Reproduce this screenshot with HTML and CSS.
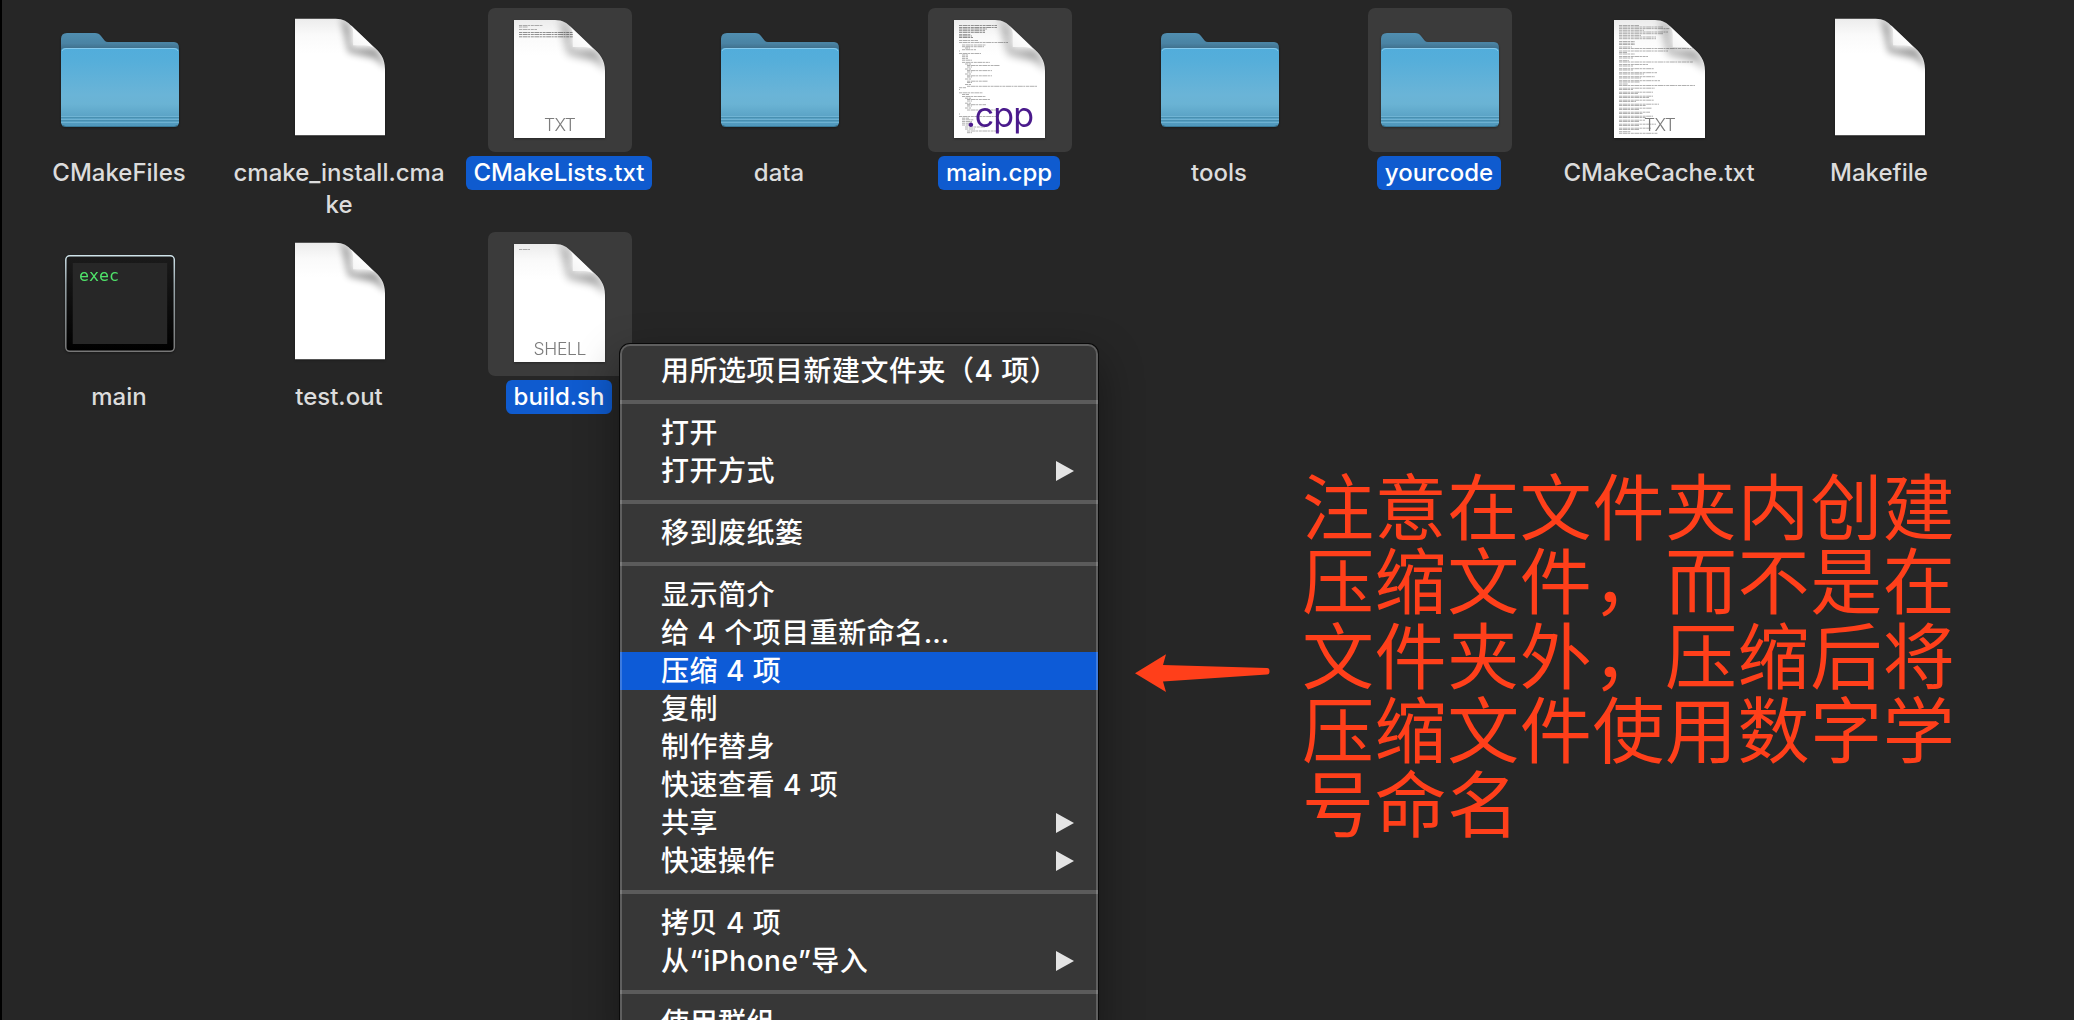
FILE: index.html
```html
<!DOCTYPE html>
<html lang="zh-CN">
<head>
<meta charset="utf-8">
<title>Finder</title>
<link rel="stylesheet" href="styles.css">
</head>
<body>
<svg class="defs" width="0" height="0" aria-hidden="true">
  <defs>
    <linearGradient id="folderFront" x1="0" y1="0" x2="0" y2="1">
      <stop offset="0" stop-color="#52addb"/><stop offset=".15" stop-color="#55aeda"/>
      <stop offset=".6" stop-color="#6ab4d7"/><stop offset=".72" stop-color="#6ab3d4"/><stop offset="1" stop-color="#4f97bb"/>
    </linearGradient>
    <linearGradient id="folderBack" x1="0" y1="0" x2="0" y2="1">
      <stop offset="0" stop-color="#508eb0"/><stop offset=".12" stop-color="#4a83a3"/><stop offset=".18" stop-color="#3f6f8b"/><stop offset="1" stop-color="#3f6f8b"/>
    </linearGradient>
    <linearGradient id="paperTop" x1="0" y1="0" x2="0" y2="1">
      <stop offset="0" stop-color="#ececec"/><stop offset=".14" stop-color="#fafafa"/><stop offset=".3" stop-color="#fff"/>
    </linearGradient>
    <linearGradient id="flap" x1="0" y1="1" x2=".6" y2=".4">
      <stop offset="0" stop-color="#f1f1f1"/><stop offset="1" stop-color="#fff"/>
    </linearGradient>
    <linearGradient id="bezel" x1="0" y1="0" x2="0" y2="1">
      <stop offset="0" stop-color="#cfe3ea"/><stop offset=".3" stop-color="#9aa7ac"/><stop offset="1" stop-color="#777"/>
    </linearGradient>
    <linearGradient id="frame" x1="0" y1="0" x2="0" y2="1">
      <stop offset="0" stop-color="#1b1b1b"/><stop offset="1" stop-color="#000"/>
    </linearGradient>
    <filter id="soft" x="-50%" y="-50%" width="200%" height="200%"><feGaussianBlur stdDeviation="4"/></filter>
    <clipPath id="sheet"><path d="M0 0H41C49 0 53 3 58 8L79 28C86 34 91 40 91 51V118H0Z"/></clipPath>

    <symbol id="folder" viewBox="0 0 144 144">
      <path d="M13 31q0-6 6-6h28q4 0 6 3l4 5q1 1 3 1h66q5 0 5 6v72H13Z" fill="url(#folderBack)"/>
      <rect x="13" y="40" width="118" height="78" rx="4" fill="url(#folderFront)"/>
      <path d="M14 43q1-2.500 4-2.500h108q3 0 4 2.500" fill="none" stroke="#86cbee" stroke-width="1"/>
      <path d="M13 108.500h118M13 111.500h118M13 114.500h118" stroke="#7fc0de" stroke-width="1" opacity=".6"/>
      <path d="M13 109.500h118M13 112.500h118" stroke="#397f9f" stroke-width="1" opacity=".5"/>
      <path d="M14 117.500q2 1 4 1h108q2 0 4-1" fill="none" stroke="#397896" stroke-width="1"/>
    </symbol>

    <symbol id="paper" viewBox="0 0 91 118">
      <path d="M0 0H41C49 0 53 3 58 8L79 28C86 34 91 40 91 51V118H0Z" fill="url(#paperTop)"/>
    </symbol>
    <symbol id="curl" viewBox="0 0 91 118">
      <g clip-path="url(#sheet)">
        <path d="M46-3L55 8 57 30 82 30 95 52 80 40 54 34Z" fill="#000" opacity=".4" filter="url(#soft)"/>
      </g>
      <path d="M56 6.500Q59 10 58.800 14V27H70Q76 27 80 30Z" fill="url(#flap)"/>
    </symbol>
  </defs>
</svg>

<main class="window">
  <section class="files">
    <figure class="file">
      <div class="thumb"><svg class="icon"><use href="#folder"/></svg></div>
      <figcaption>CMakeFiles</figcaption>
    </figure>
    <figure class="file">
      <div class="thumb"><svg class="icon" viewBox="0 0 144 144"><use href="#paper" x="27" y="10" width="90" height="118"/><use href="#curl" x="27" y="10" width="90" height="118"/></svg></div>
      <figcaption>cmake_install.cma<br>ke</figcaption>
    </figure>
    <figure class="file selected">
      <div class="thumb"><svg class="icon" viewBox="0 0 144 144"><g transform="translate(26 12)"><use href="#paper" width="91" height="118"/>
        <path class="code" d="M5 5.500h24M5 7h9M5 9.500h18"/><path class="code dense" d="M5 12.500h54M5 14.500h54M5 16.800h54"/>
        <use href="#curl" width="91" height="118"/><text class="kind" x="30" y="110.500" textLength="32">TXT</text></g></svg></div>
      <figcaption>CMakeLists.txt</figcaption>
    </figure>
    <figure class="file">
      <div class="thumb"><svg class="icon"><use href="#folder"/></svg></div>
      <figcaption>data</figcaption>
    </figure>
    <figure class="file selected">
      <div class="thumb"><svg class="icon" viewBox="0 0 144 144"><g transform="translate(26 12)"><use href="#paper" width="91" height="118"/>
        <path class="code dense" d="M5 5.500h38M5 7.500h38M5 9h28M5 10.700h26M5 12.400h26M5 14.700h12M5 16h13M5 17.500h14"/>
        <path class="code" d="M5 20.500h19M5 22.500h49M8 25h24M8 26.700h22M11 28h5M8 29.700h14M5 31h1M5 33.500h22M8 35h6M8 36.700h6M8 38.400h6M8 40.200h10M8 42.400h28M11 44h6M13 45.500h33M13 47h5M11 49h6M13 50.600h25M13 52h5M11 54h6M13 55.800h25M13 57h5M11 59h6M13 61.200h21M13 62.500h5M11 64.500h6M13 66.300h70M5 67.700h7M5 69.500h1M5 72.800h24M8 74.500h7M8 76.500h24M11 78.200h6M13 79.500h23M13 81h5M11 83.200h6M13 84.700h19M13 86h5M11 88h6M13 90h30M5 94h1M5 96.500h40M8 98.200h7M8 99.800h12M8 101.500h10M8 103.200h10M8 105h8M11 107h20M11 109h10M13 111h33M13 112.700h5"/>
        <use href="#curl" width="91" height="118"/><text class="cpp" x="12" y="106.500" textLength="68">.cpp</text></g></svg></div>
      <figcaption>main.cpp</figcaption>
    </figure>
    <figure class="file">
      <div class="thumb"><svg class="icon"><use href="#folder"/></svg></div>
      <figcaption>tools</figcaption>
    </figure>
    <figure class="file selected">
      <div class="thumb"><svg class="icon"><use href="#folder"/></svg></div>
      <figcaption>yourcode</figcaption>
    </figure>
    <figure class="file">
      <div class="thumb"><svg class="icon" viewBox="0 0 144 144"><g transform="translate(26 12)"><use href="#paper" width="91" height="118"/>
        <path class="code" d="M5 5.500h20M5 7h44M5 8.600h51M5 10.300h25M5 12h49M5 13.700h44M5 15.400h22M5 17h37M5 18.700h37M5 21.500h16M5 23.200h16M5 24.500h16M5 27h13M5 28.500h74M5 31h49M5 32.500h8M5 34h16M5 36.500h29M5 38h14M5 40.700h10M5 42h74M5 44.500h29M5 46h14M5 48.700h35M5 50h14M5 52.700h38M5 54h25M5 56.700h36M5 58h22M5 60.700h41M5 62h21M5 64h9M5 65.500h76M5 68.200h36M5 69.500h14M5 72.200h34M5 73.500h19M5 76.200h34M5 77.500h30M5 80.200h35M5 81.500h17M5 84.200h40M5 85.500h27M5 88.200h33M5 89.500h20M5 92.200h31M5 93.500h24M5 96.200h34M5 97.500h27M5 100.200h26M5 101.500h20M5 104.200h37M5 105.500h20M5 108.200h32M5 109.500h20M5 111.700h12M5 113.300h39"/>
        <use href="#curl" width="91" height="118"/><text class="kind" x="30" y="110.500" textLength="32">TXT</text></g></svg></div>
      <figcaption>CMakeCache.txt</figcaption>
    </figure>
    <figure class="file">
      <div class="thumb"><svg class="icon" viewBox="0 0 144 144"><use href="#paper" x="27" y="10" width="90" height="118"/><use href="#curl" x="27" y="10" width="90" height="118"/></svg></div>
      <figcaption>Makefile</figcaption>
    </figure>
    <figure class="file">
      <div class="thumb"><svg class="icon" viewBox="0 0 144 144">
        <rect x="17.800" y="23.800" width="108.500" height="95.500" rx="4" fill="url(#frame)" stroke="url(#bezel)" stroke-width="1.500"/>
        <rect x="24.700" y="31" width="94.500" height="81" fill="#272727"/>
        <text class="exec" x="31" y="48.500">exec</text></svg></div>
      <figcaption>main</figcaption>
    </figure>
    <figure class="file">
      <div class="thumb"><svg class="icon" viewBox="0 0 144 144"><use href="#paper" x="27" y="10" width="90" height="118"/><use href="#curl" x="27" y="10" width="90" height="118"/></svg></div>
      <figcaption>test.out</figcaption>
    </figure>
    <figure class="file selected">
      <div class="thumb"><svg class="icon" viewBox="0 0 144 144"><g transform="translate(26 12)"><use href="#paper" width="91" height="118"/>
        <path class="code" d="M5 5.500h11"/>
        <use href="#curl" width="91" height="118"/><text class="kind" x="19.500" y="111" textLength="53">SHELL</text></g></svg></div>
      <figcaption>build.sh</figcaption>
    </figure>
  </section>

  <nav class="menu">
    <ul>
      <li>用所选项目新建文件夹（4 项）</li>
    </ul>
    <ul>
      <li>打开</li>
      <li class="more">打开方式</li>
    </ul>
    <ul>
      <li>移到废纸篓</li>
    </ul>
    <ul>
      <li>显示简介</li>
      <li>给 4 个项目重新命名…</li>
      <li class="active">压缩 4 项</li>
      <li>复制</li>
      <li>制作替身</li>
      <li>快速查看 4 项</li>
      <li class="more">共享</li>
      <li class="more">快速操作</li>
    </ul>
    <ul>
      <li>拷贝 4 项</li>
      <li class="more">从“iPhone”导入</li>
    </ul>
    <ul>
      <li>使用群组</li>
    </ul>
  </nav>

  <aside class="note">
    <svg class="arrow" viewBox="0 0 136 40"><path d="M0 20.300L31 1.300 28 12 132 15Q134.500 15 134.500 18.200T132 21.400L28 28.500 31 39Z" fill="#ff3f1a"/></svg>
    <p>注意在文件夹内创建<br>压缩文件，而不是在<br>文件夹外，压缩后将<br>压缩文件使用数字学<br>号命名</p>
  </aside>
</main>
</body>
</html>
```
FILE: styles.css
```css
* { box-sizing: border-box; margin: 0; padding: 0; }

body {
  background: #262626;
  font-family: Inter, "Noto Sans CJK SC", sans-serif;
  overflow: hidden;
}

.defs { position: absolute; }

.window {
  position: relative;
  height: 1020px;
  overflow: hidden;
  border-left: 2px solid #000;
  background: #262626;
}

.files {
  display: grid;
  grid-template-columns: repeat(9, 220px);
  grid-auto-rows: 224px;
  padding: 8px 0 0 8px;
}

.file {
  display: flex;
  flex-direction: column;
  align-items: center;
  gap: 4px;
}

.thumb {
  width: 144px;
  height: 144px;
  border-radius: 7px;
}

.icon {
  display: block;
  width: 144px;
  height: 144px;
  filter: drop-shadow(0 1px 1px rgba(0, 0, 0, .35));
}

.file figcaption {
  margin-right: 2px;
  padding: 1px 8px;
  border-radius: 6px;
  color: #dcdcdc;
  font-size: 24px;
  font-weight: 450;
  line-height: 32px;
  text-align: center;
  white-space: nowrap;
}

.selected .thumb { background: #3b3b3b; }
.selected figcaption { background: #0f5bcf; color: #fff; }

.code { fill: none; stroke: #777; stroke-width: .9; stroke-dasharray: 3 .6 5 .5 2 .7; opacity: .65; }
.code.dense { opacity: .9; }
.kind { font-size: 17.500px; fill: #7c7c7c; font-weight: 300; }
.cpp { font-size: 34px; fill: #4a1a8c; }
.exec { font-family: "DejaVu Sans Mono", monospace; font-size: 16.600px; fill: #4fe36a; }

.menu {
  position: absolute;
  left: 618px;
  top: 344px;
  width: 478px;
  height: 700px;
  padding-top: 8px;
  border-radius: 10px 10px 0 0;
  background: #373737;
  box-shadow: 0 0 0 1px #0a0a0a, 0 16px 44px rgba(0, 0, 0, .42);
  color: #fff;
}

.menu::after {
  content: "";
  position: absolute;
  inset: 0;
  border: 2px solid rgba(255, 255, 255, .2);
  border-radius: inherit;
  pointer-events: none;
}

.menu ul { list-style: none; padding: 10px 0; }
.menu ul:first-child { padding-top: 0; }
.menu ul + ul { border-top: 4px solid #5b5b5b; }

.menu li {
  display: flex;
  align-items: center;
  justify-content: space-between;
  height: 38px;
  padding: 0 24px 0 41px;
  font-size: 28px;
  font-weight: 500;
  letter-spacing: .5px;
  line-height: 38px;
  white-space: pre;
}

.menu .active { background: #0d5bd7; }

.more::after {
  content: "";
  width: 18px;
  height: 20px;
  background: #e4e4e4;
  clip-path: polygon(0 0, 100% 50%, 0 100%);
}

.note {
  position: absolute;
  left: 1133px;
  top: 466px;
  display: flex;
  gap: 31px;
  color: #ff3f1a;
}

.arrow { width: 136px; height: 40px; margin-top: 187px; }

.note p {
  font-family: "Noto Sans CJK SC", sans-serif;
  font-size: 72px;
  font-weight: 400;
  letter-spacing: .6px;
  line-height: 74.300px;
  white-space: nowrap;
}
```
